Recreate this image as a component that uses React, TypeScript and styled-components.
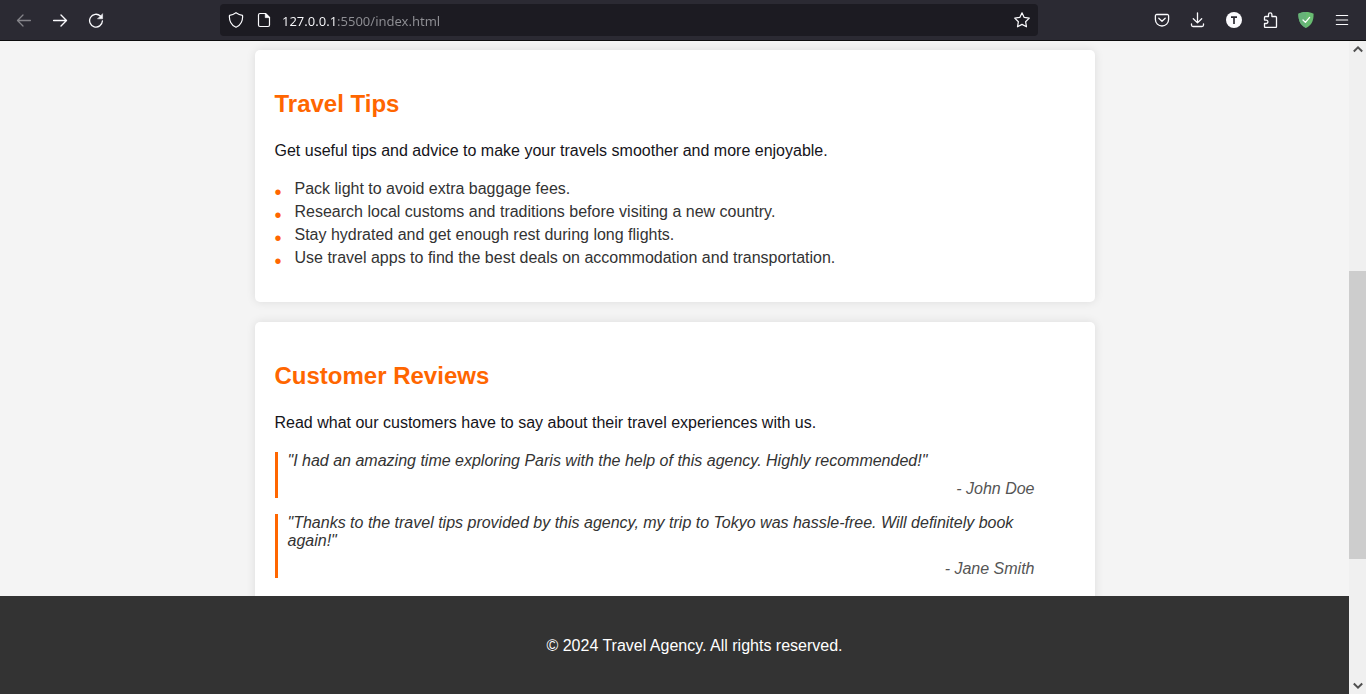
import React from "react";
import styled, { createGlobalStyle } from "styled-components";

const GlobalStyle = createGlobalStyle`
  *, *::before, *::after { box-sizing: border-box; }
  html, body { margin: 0; padding: 0; }
  body {
    font-family: "Liberation Sans", Arial, sans-serif;
    font-size: 16px;
    line-height: 18px;
    color: #15141a;
    overflow: hidden;
  }
`;

const Browser = styled.div`
  display: flex;
  flex-direction: column;
  height: 100vh;
`;

const Toolbar = styled.header`
  display: flex;
  align-items: center;
  flex: none;
  height: 41px;
  padding: 0 6px;
  background: #2b2a33;
  border-bottom: 1px solid #0c0c0d;
`;

const ToolButton = styled.button`
  display: flex;
  align-items: center;
  justify-content: center;
  flex: none;
  width: 36px;
  height: 32px;
  padding: 0;
  border: 0;
  background: none;
  color: #fbfbfe;

  &:disabled { color: #85848a; }
`;

const AddressBar = styled.form`
  display: flex;
  align-items: center;
  flex: 1;
  min-width: 0;
  height: 32px;
  margin: 0 106px;
  padding: 0 2px;
  border-radius: 4px;
  background: #1c1b22;
`;

const FieldButton = styled(ToolButton)`
  width: 28px;
`;

const AddressInput = styled.input`
  flex: 1;
  min-width: 0;
  height: 32px;
  margin: 0;
  padding: 2px 4px 0;
  border: 0;
  outline: 0;
  font-family: "Noto Sans", sans-serif;
  font-size: 13px;
  color: transparent;
  background: linear-gradient(to right, #fbfbfe 59px, #8f8f94 59px);
  background-clip: text;
  -webkit-background-clip: text;
`;

const Viewport = styled.div`
  display: flex;
  flex: 1;
  min-height: 0;
`;

const Page = styled.div`
  display: flex;
  flex-direction: column;
  flex: 1;
  min-width: 0;
  overflow: hidden;
  background: #f4f4f4;
`;

const Main = styled.main`
  display: flex;
  flex-direction: column;
  align-items: center;
  gap: 20px;
  flex: 1;
  min-height: 0;
  overflow: hidden;
  padding-top: 9px;
`;

const Card = styled.section`
  flex: none;
  width: 100%;
  max-width: 840px;
  padding: 40px 20px 30px;
  border-radius: 5px;
  background: #fff;
  box-shadow: 0 0 10px rgba(0, 0, 0, 0.1);
`;

const Title = styled.h2`
  margin: 0 0 24px;
  font-size: 24px;
  line-height: 28px;
  color: #ff6600;
`;

const Intro = styled.p`
  margin: 0 0 20px;
`;

const TipList = styled.ul`
  margin: 0;
  padding: 0;
  list-style: none;
`;

const Tip = styled.li`
  position: relative;
  margin-bottom: 5px;
  padding-left: 20px;
  color: #333;

  &::before {
    content: "•";
    position: absolute;
    left: 0;
    top: 3px;
    font-size: 20px;
    color: #ff6600;
  }
`;

const Quote = styled.blockquote`
  margin: 0 40px 16px 0;
  padding-left: 10px;
  border-left: 3px solid #ff6600;
  font-style: italic;
  color: #333;
`;

const Author = styled.cite`
  display: block;
  margin-top: 10px;
  text-align: right;
  color: #555;
`;

const Footer = styled.footer`
  flex: none;
  padding: 41px 0 39px 40px;
  text-align: center;
  color: #fff;
  background: #333;
`;

const FooterText = styled.p`
  margin: 0;
`;

const Scrollbar = styled.div`
  display: flex;
  flex-direction: column;
  flex: none;
  width: 17px;
  background: #f0f0f0;
`;

const ScrollButton = styled.button`
  display: flex;
  align-items: center;
  justify-content: center;
  flex: none;
  height: 17px;
  padding: 0;
  border: 0;
  background: none;
  color: #505050;
`;

const Track = styled.div<{ $share: number }>`
  flex: ${(p) => p.$share} 1 0;
`;

const Thumb = styled(Track)`
  background: #cdcdcd;
`;

type IconProps = { children: React.ReactNode; width?: number };

const Icon = ({ children, width = 1.3 }: IconProps) => (
  <svg
    width="16"
    height="16"
    viewBox="0 0 16 16"
    fill="none"
    stroke="currentColor"
    strokeWidth={width}
    strokeLinecap="round"
    strokeLinejoin="round"
    aria-hidden="true"
  >
    {children}
  </svg>
);

const tips = [
  "Pack light to avoid extra baggage fees.",
  "Research local customs and traditions before visiting a new country.",
  "Stay hydrated and get enough rest during long flights.",
  "Use travel apps to find the best deals on accommodation and transportation.",
];

const reviews = [
  {
    text: '"I had an amazing time exploring Paris with the help of this agency. Highly recommended!"',
    author: "- John Doe",
  },
  {
    text: '"Thanks to the travel tips provided by this agency, my trip to Tokyo was hassle-free. Will definitely book again!"',
    author: "- Jane Smith",
  },
];

export default function App() {
  return (
    <Browser>
      <GlobalStyle />
      <Toolbar>
        <ToolButton aria-label="Back" disabled>
          <Icon><path d="M14.4 8.5H1.6M7 3 1.5 8.5 7 14" /></Icon>
        </ToolButton>
        <ToolButton aria-label="Forward">
          <Icon width={1.4}><path d="M1.6 8.5h12.8M9 3l5.5 5.5L9 14" /></Icon>
        </ToolButton>
        <ToolButton aria-label="Reload">
          <Icon width={1.3}>
            <path d="M12.4 4A6.400 6.400 0 1 0 14.400 9" />
            <path d="M14.600 2v4.800H9.800z" fill="currentColor" strokeWidth=".5" />
          </Icon>
        </ToolButton>
        <AddressBar onSubmit={(e) => e.preventDefault()}>
          <FieldButton type="button" aria-label="Tracking protection">
            <Icon width={1.2}>
              <path d="M8 .7C9.800 2 12 3 14.500 3.300 15.100 8.300 12.800 13.400 8 15.300 3.200 13.400.9 8.300 1.500 3.300 4 3 6.200 2 8 .7Z" />
            </Icon>
          </FieldButton>
          <FieldButton type="button" aria-label="Site information">
            <Icon width={1.2}>
              <path d="M4 1.500h5.500l4 4v7.500a1.500 1.500 0 0 1-1.500 1.500H4A1.500 1.500 0 0 1 2.500 13V3A1.500 1.500 0 0 1 4 1.500Z" />
              <path d="M9.300 1.600v4h4z" fill="currentColor" strokeWidth=".8" />
            </Icon>
          </FieldButton>
          <AddressInput aria-label="Address" defaultValue="127.0.0.1:5500/index.html" spellCheck={false} />
          <FieldButton type="button" aria-label="Bookmark this page">
            <Icon width={1.2}>
              <path d="m8 .8 2.200 4.600 5.100.7-3.700 3.600.9 5.100L8 12.400l-4.500 2.400.9-5.100L.7 6.100l5.100-.7Z" />
            </Icon>
          </FieldButton>
        </AddressBar>
        <ToolButton aria-label="Save to Pocket">
          <Icon width={1.3}>
            <path d="M2.700 2.500h10.600a1.300 1.300 0 0 1 1.300 1.300v3.700a6.600 6.500 0 0 1-13.200 0V3.800a1.300 1.300 0 0 1 1.300-1.300Z" />
            <path d="m4.800 6.300 3.200 3 3.200-3" />
          </Icon>
        </ToolButton>
        <ToolButton aria-label="Downloads">
          <Icon width={1.3}>
            <path d="M7.500.8v10M3.300 6.800l4.200 4.100 4.200-4.100M1.500 11.800V13A1.500 1.500 0 0 0 3 14.500h9a1.500 1.500 0 0 0 1.500-1.500v-1.200" />
          </Icon>
        </ToolButton>
        <ToolButton aria-label="Account">
          <Icon>
            <circle cx="8" cy="8" r="8" fill="currentColor" stroke="none" />
            <path d="M5 5.200h6M8 5.200V12" stroke="#2b2a33" strokeWidth="1.700" strokeLinecap="butt" />
          </Icon>
        </ToolButton>
        <ToolButton aria-label="Extensions">
          <Icon width={1.3}>
            <path d="M6.500 4.500V2.500a1.700 1.700 0 0 1 3.400 0v2h3.600a1 1 0 0 1 1 1v9a1 1 0 0 1-1 1h-10a1 1 0 0 1-1-1v-3h1.700a1.700 1.700 0 0 0 0-3.400H2.500V5.500a1 1 0 0 1 1-1Z" />
          </Icon>
        </ToolButton>
        <ToolButton aria-label="Ad blocker">
          <Icon>
            <path d="M8 0c2.600 0 5.500.6 7.600 1.700C15.600 8 14.400 12.500 8 16 1.600 12.500.4 8 .4 1.700 2.500.6 5.400 0 8 0Z" fill="#68bc71" stroke="none" />
            <path d="M8 0v16C1.600 12.500.4 8 .4 1.700 2.500.6 5.400 0 8 0Z" fill="#67b279" stroke="none" />
            <path d="m5 8 2.400 2.400 4.200-5" stroke="#fff" strokeWidth="1.300" />
          </Icon>
        </ToolButton>
        <ToolButton aria-label="Menu">
          <Icon width={1.1}><path d="M2.300 3.500h11.400M2.300 8h11.400M2.300 12.500h11.400" /></Icon>
        </ToolButton>
      </Toolbar>
      <Viewport>
        <Page>
          <Main>
            <Card>
              <Title>Travel Tips</Title>
              <Intro>Get useful tips and advice to make your travels smoother and more enjoyable.</Intro>
              <TipList>
                {tips.map((tip) => (
                  <Tip key={tip}>{tip}</Tip>
                ))}
              </TipList>
            </Card>
            <Card>
              <Title>Customer Reviews</Title>
              <Intro>Read what our customers have to say about their travel experiences with us.</Intro>
              {reviews.map((review) => (
                <Quote key={review.author}>
                  {review.text}
                  <Author>{review.author}</Author>
                </Quote>
              ))}
            </Card>
          </Main>
          <Footer>
            <FooterText>© 2024 Travel Agency. All rights reserved.</FooterText>
          </Footer>
        </Page>
        <Scrollbar>
          <ScrollButton aria-label="Scroll up">
            <Icon width={2}><path d="M3.800 9.500 8 5.300l4.200 4.200" strokeLinecap="butt" strokeLinejoin="miter" /></Icon>
          </ScrollButton>
          <Track $share={213} />
          <Thumb $share={288} />
          <Track $share={118} />
          <ScrollButton aria-label="Scroll down">
            <Icon width={2}><path d="M3.800 5.500 8 9.700l4.200-4.200" strokeLinecap="butt" strokeLinejoin="miter" /></Icon>
          </ScrollButton>
        </Scrollbar>
      </Viewport>
    </Browser>
  );
}
